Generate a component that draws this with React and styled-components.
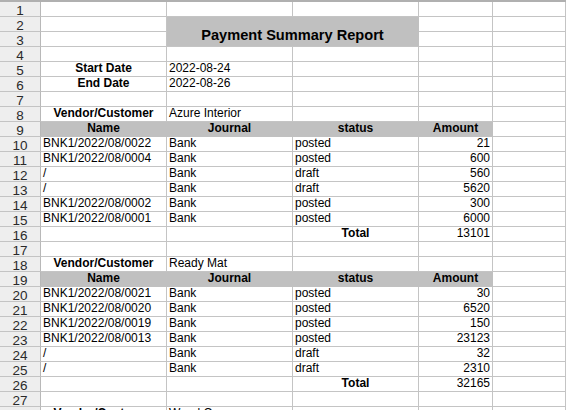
import React from "react";
import styled, { createGlobalStyle } from "styled-components";

const GlobalStyle = createGlobalStyle`
  html, body {
    margin: 0;
    padding: 0;
    background: #ffffff;
    overflow: hidden;
  }
  body {
    font-family: "Liberation Sans", Arial, sans-serif;
    color: #000;
  }
`;

const GRID = "#c4c4c4";

const Sheet = styled.div`
  display: grid;
  grid-template-columns: 41px 126px 126px 126px 74px 1fr;
  grid-auto-rows: 15px;
  border-top: 2px solid #b0b0b0;
  width: 566px;
  height: 408px;
  overflow: hidden;
`;

const RowHead = styled.div`
  box-sizing: border-box;
  background: #eeeeee;
  border-right: 1px solid #b8b8b8;
  border-bottom: 1px solid ${GRID};
  font-family: "Liberation Sans", Arial, sans-serif;
  font-size: 13.5px;
  line-height: 13px;
  padding-top: 2px;
  color: #2a2a2a;
  text-align: center;
  overflow: hidden;
`;

const Cell = styled.div`
  box-sizing: border-box;
  border-right: 1px solid ${(p) => (p.$bg ? p.$bg : GRID)};
  border-bottom: 1px solid ${(p) => (p.$bg ? p.$bg : GRID)};
  background: ${(p) => p.$bg || "transparent"};
  font-size: 12px;
  line-height: 14px;
  font-weight: ${(p) => (p.$bold ? 700 : 400)};
  text-align: ${(p) => p.$align || "left"};
  padding: 0 2px;
  white-space: nowrap;
  overflow: visible;
  display: flex;
  align-items: flex-end;
  justify-content: ${(p) =>
    p.$align === "center" ? "center" : p.$align === "right" ? "flex-end" : "flex-start"};
`;

const Text = styled.span`
  display: block;
  padding-bottom: 1px;
`;

const TitleCell = styled.div`
  box-sizing: border-box;
  grid-column: span 2;
  grid-row: span 2;
  background: #c0c0c0;
  border-right: 1px solid #c0c0c0;
  border-bottom: 1px solid ${GRID};
  font-size: 14.6px;
  font-weight: 700;
  display: flex;
  align-items: flex-end;
  justify-content: center;
  padding-bottom: 3px;
  white-space: nowrap;
`;

const HEAD_BG = "#c0c0c0";

const rows = [
  { kind: "blank" },
  { kind: "title" },
  { kind: "titleCont" },
  { kind: "blank" },
  { kind: "label", a: "Start Date", b: "2022-08-24" },
  { kind: "label", a: "End Date", b: "2022-08-26" },
  { kind: "blank" },
  { kind: "label", a: "Vendor/Customer", b: "Azure Interior" },
  { kind: "head" },
  { kind: "data", a: "BNK1/2022/08/0022", b: "Bank", c: "posted", d: "21" },
  { kind: "data", a: "BNK1/2022/08/0004", b: "Bank", c: "posted", d: "600" },
  { kind: "data", a: "/", b: "Bank", c: "draft", d: "560" },
  { kind: "data", a: "/", b: "Bank", c: "draft", d: "5620" },
  { kind: "data", a: "BNK1/2022/08/0002", b: "Bank", c: "posted", d: "300" },
  { kind: "data", a: "BNK1/2022/08/0001", b: "Bank", c: "posted", d: "6000" },
  { kind: "total", d: "13101" },
  { kind: "blank" },
  { kind: "label", a: "Vendor/Customer", b: "Ready Mat" },
  { kind: "head" },
  { kind: "data", a: "BNK1/2022/08/0021", b: "Bank", c: "posted", d: "30" },
  { kind: "data", a: "BNK1/2022/08/0020", b: "Bank", c: "posted", d: "6520" },
  { kind: "data", a: "BNK1/2022/08/0019", b: "Bank", c: "posted", d: "150" },
  { kind: "data", a: "BNK1/2022/08/0013", b: "Bank", c: "posted", d: "23123" },
  { kind: "data", a: "/", b: "Bank", c: "draft", d: "32" },
  { kind: "data", a: "/", b: "Bank", c: "draft", d: "2310" },
  { kind: "total", d: "32165" },
  { kind: "blank" },
  { kind: "label", a: "Vendor/Customer", b: "Wood Corner" },
  { kind: "blank" },
];

function C({ children, ...rest }) {
  return (
    <Cell {...rest}>
      <Text>{children}</Text>
    </Cell>
  );
}

function renderRow(row, i) {
  const n = i + 1;
  const head = <RowHead key={`h${n}`}>{n}</RowHead>;
  switch (row.kind) {
    case "title":
      return [
        head,
        <C key={`a${n}`} />,
        <TitleCell key={`t${n}`}>Payment Summary Report</TitleCell>,
        <C key={`d${n}`} />,
        <C key={`e${n}`} />,
      ];
    case "titleCont":
      return [head, <C key={`a${n}`} />, <C key={`d${n}`} />, <C key={`e${n}`} />];
    case "label":
      return [
        head,
        <C key={`a${n}`} $bold $align="center">{row.a}</C>,
        <C key={`b${n}`}>{row.b}</C>,
        <C key={`c${n}`} />,
        <C key={`d${n}`} />,
        <C key={`e${n}`} />,
      ];
    case "head":
      return [
        head,
        <C key={`a${n}`} $bold $align="center" $bg={HEAD_BG}>Name</C>,
        <C key={`b${n}`} $bold $align="center" $bg={HEAD_BG}>Journal</C>,
        <C key={`c${n}`} $bold $align="center" $bg={HEAD_BG}>status</C>,
        <C key={`d${n}`} $bold $align="center" $bg={HEAD_BG}>Amount</C>,
        <C key={`e${n}`} />,
      ];
    case "data":
      return [
        head,
        <C key={`a${n}`}>{row.a}</C>,
        <C key={`b${n}`}>{row.b}</C>,
        <C key={`c${n}`}>{row.c}</C>,
        <C key={`d${n}`} $align="right">{row.d}</C>,
        <C key={`e${n}`} />,
      ];
    case "total":
      return [
        head,
        <C key={`a${n}`} />,
        <C key={`b${n}`} />,
        <C key={`c${n}`} $bold $align="center">Total</C>,
        <C key={`d${n}`} $align="right">{row.d}</C>,
        <C key={`e${n}`} />,
      ];
    default:
      return [
        head,
        <C key={`a${n}`} />,
        <C key={`b${n}`} />,
        <C key={`c${n}`} />,
        <C key={`d${n}`} />,
        <C key={`e${n}`} />,
      ];
  }
}

export default function App() {
  return (
    <>
      <GlobalStyle />
      <Sheet>{rows.flatMap(renderRow)}</Sheet>
    </>
  );
}
